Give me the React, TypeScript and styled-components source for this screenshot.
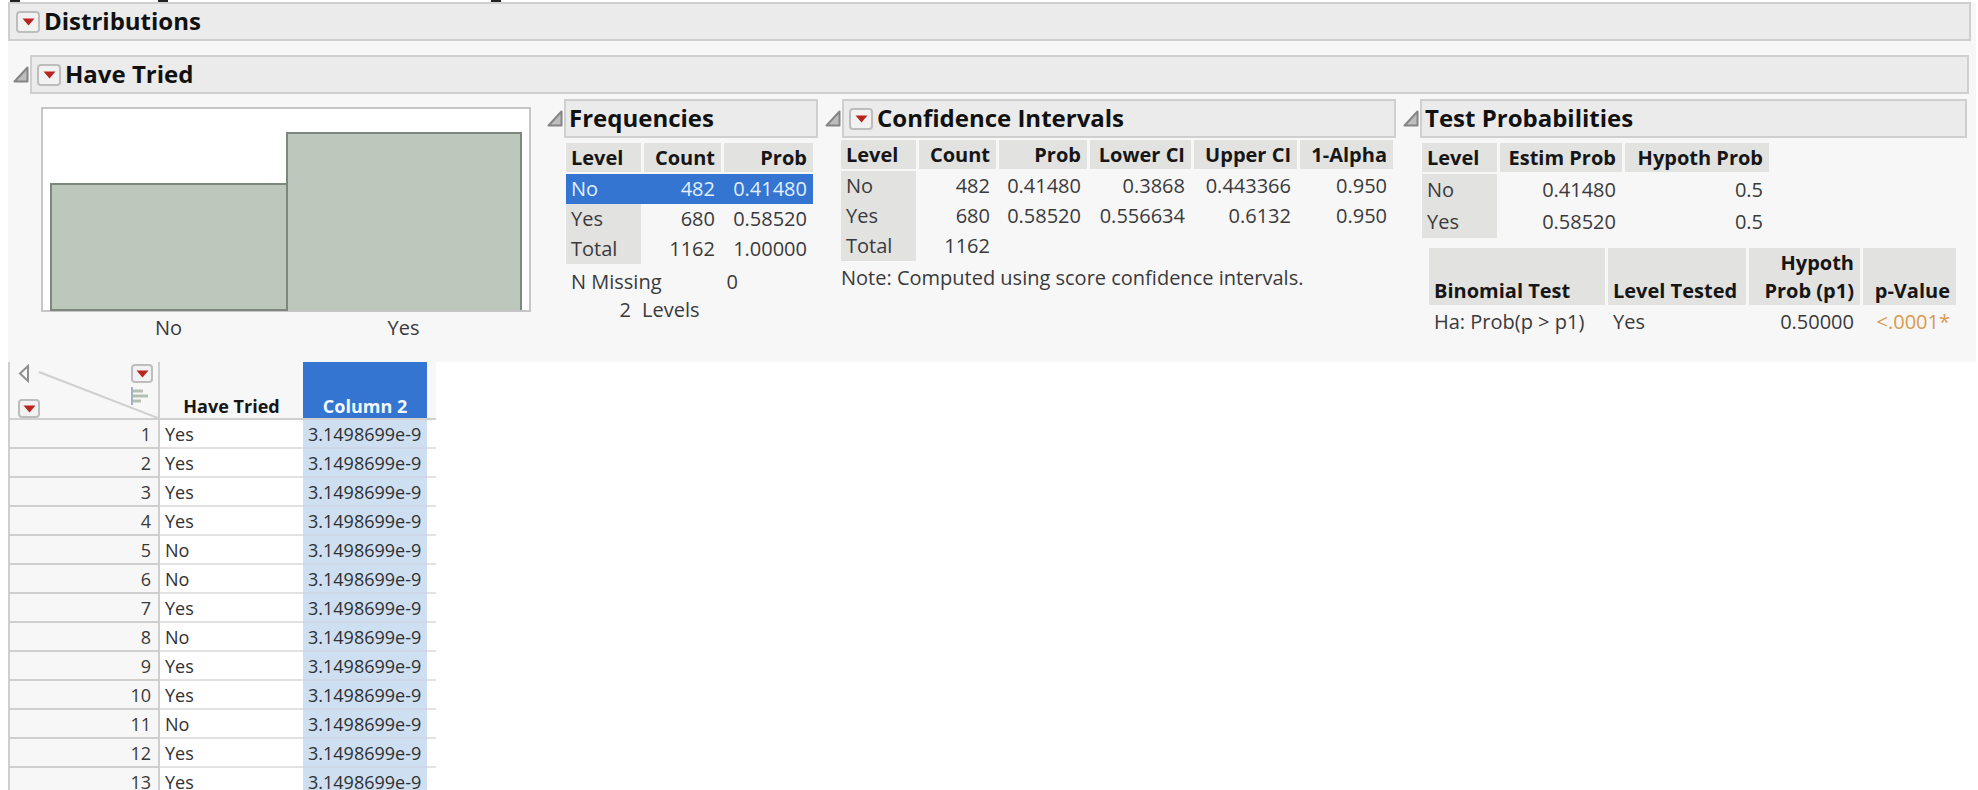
import React from "react";
import styled, { createGlobalStyle } from "styled-components";

const GlobalStyle = createGlobalStyle`
  *, *::before, *::after { box-sizing: border-box; }
  html, body, #root { height: 100%; }
  body {
    margin: 0;
    overflow: hidden;
    background: #fff;
    color: #3a3a3c;
    font-family: "Open Sans", "Noto Sans", sans-serif;
    font-size: 20px;
    line-height: 28px;
  }
`;

const panelColor = "#f7f7f7";
const cellColor = "#e2e2e0";
const lineColor = "#cfcfcf";
const selectColor = "#3375d0";

const Page = styled.main`
  height: 100%;
  padding-right: 2px;
  padding-left: 8px;
  overflow: hidden;
`;

const TickStrip = styled.svg`
  display: block;
  width: 100%;
  height: 2px;
`;

const Report = styled.section`
  height: 360px;
  padding-right: 5px;
  background: ${panelColor};
`;

const ReportBody = styled.div`
  padding: 14px 2px 0 2px;
`;

const Heading = styled.header`
  display: flex;
  align-items: center;
`;

const TitleBar = styled.div<{ $inset: number }>`
  display: flex;
  flex: 1;
  align-items: center;
  gap: 4px;
  height: 39px;
  padding-left: ${(p) => p.$inset}px;
  border: 2px solid ${lineColor};
  background: #ebebeb;
`;

const Title = styled.h2`
  margin: 0;
  padding-bottom: 2px;
  color: #111;
  font-size: 24px;
  font-weight: 700;
  line-height: 28px;
  white-space: nowrap;
`;

const Disclosure = styled.button`
  display: flex;
  width: 20px;
  height: 18px;
  padding: 0 0 0 3px;
  border: 0;
  background: none;
`;

const MenuButton = styled.button<{ $short?: boolean }>`
  display: flex;
  flex: none;
  align-items: center;
  justify-content: center;
  width: ${(p) => (p.$short ? 22 : 24)}px;
  height: ${(p) => (p.$short ? 19 : 22)}px;
  padding: 0;
  border: 2px solid #bdbdbd;
  border-radius: 4px;
  background: #f2f2f2;
`;

const Columns = styled.div`
  display: grid;
  grid-template-columns: 499px 274px 574px 1fr;
  column-gap: 4px;
  padding: 5px 2px 0 31px;
`;

const Chart = styled.figure`
  width: 490px;
  margin: 8px 0 0;
`;

const ChartArea = styled.svg`
  display: block;
  width: 100%;
  height: 205px;
`;

const ChartLabels = styled.figcaption`
  display: grid;
  grid-template-columns: 1fr 1fr;
  padding: 2px 10px;
  text-align: center;
`;

const Node = styled.section`
  min-width: 0;
`;

const NodeBody = styled.div<{ $top: number; $left: number }>`
  padding: ${(p) => p.$top}px 0 0 ${(p) => p.$left}px;
`;

const Table = styled.table<{ $width: number }>`
  width: ${(p) => p.$width}px;
  border-spacing: 0;
  table-layout: fixed;
`;

const Th = styled.th<{ $left?: boolean }>`
  padding: 1px 6px 0 5px;
  border-right: 3px solid ${panelColor};
  border-bottom: 2px solid ${panelColor};
  background: ${cellColor};
  color: #161616;
  font-size: 20px;
  font-weight: 700;
  line-height: 28px;
  text-align: ${(p) => (p.$left ? "left" : "right")};
  vertical-align: bottom;
  white-space: nowrap;
  &:last-child { border-right: 0; }
`;

const Row = styled.tr<{ $selected?: boolean; $height?: number }>`
  height: ${(p) => p.$height || 30}px;
  background: ${(p) => (p.$selected ? selectColor : "transparent")};
  color: ${(p) => (p.$selected ? "#e2efff" : "inherit")};
`;

const Td = styled.td<{ $kind?: "level" | "text" | "alert" }>`
  padding: 0 9px 0 0;
  text-align: right;
  white-space: nowrap;
  color: ${(p) => (p.$kind === "alert" ? "#d99a4e" : "inherit")};
  ${(p) =>
    (p.$kind === "level" || p.$kind === "text") &&
    `
    padding-left: 5px;
    text-align: left;
  `}
  ${(p) =>
    p.$kind === "level" &&
    `
    border-right: 3px solid ${panelColor};
    background: ${cellColor};
  `}
  ${Row}[aria-selected="true"] & {
    border-color: transparent;
    background: none;
  }
  &:last-child { padding-right: 6px; }
`;

const Note = styled.p`
  margin: 3px 0 0;
`;

const Summary = styled.dl`
  display: grid;
  grid-template-columns: 60px 11px 73px 23px;
  margin: 4px 0 0 5px;
`;

const MissingLabel = styled.dt`
  grid-column: 1 / 4;
`;

const LevelsLabel = styled.dt`
  grid-column: 3 / 5;
  grid-row: 2;
`;

const SummaryValue = styled.dd<{ $column: number; $row: number }>`
  grid-column: ${(p) => p.$column};
  grid-row: ${(p) => p.$row};
  margin: 0;
  text-align: right;
`;

const BinomialWrap = styled.div`
  padding: 10px 0 0 7px;
`;

const Sheet = styled.table`
  width: 427px;
  border-spacing: 0;
  table-layout: fixed;
  border-left: 2px solid ${lineColor};
  font-size: 18px;
  line-height: 24px;
  white-space: nowrap;
`;

const SheetHead = styled.th<{ $selected?: boolean }>`
  height: 58px;
  padding: 0;
  border-bottom: 2px solid ${lineColor};
  background: ${(p) => (p.$selected ? selectColor : panelColor)};
  color: ${(p) => (p.$selected ? "#f2f8ff" : "#161616")};
  font-weight: 700;
  text-align: center;
  vertical-align: bottom;
`;

const CornerHead = styled(SheetHead)`
  border-right: 2px solid ${lineColor};
`;

const Corner = styled.div`
  position: relative;
  display: flex;
  justify-content: space-between;
  height: 56px;
  padding: 2px 5px 0 8px;
`;

const CornerLine = styled.svg`
  position: absolute;
  inset: 0;
  width: 100%;
  height: 100%;
`;

const CornerStack = styled.div<{ $spread?: boolean }>`
  position: relative;
  display: flex;
  flex-direction: column;
  justify-content: ${(p) => (p.$spread ? "space-between" : "flex-start")};
  gap: 4px;
`;

const PlainButton = styled.button`
  display: flex;
  padding: 0;
  border: 0;
  background: none;
`;

const RowNumber = styled.th`
  height: 29px;
  padding: 0 7px 0 0;
  border-right: 2px solid ${lineColor};
  border-bottom: 2px solid ${lineColor};
  background: ${panelColor};
  font-weight: 400;
  text-align: right;
`;

const SheetCell = styled.td<{ $selected?: boolean }>`
  height: 29px;
  padding: 0 6px 0 5px;
  border-bottom: 2px solid ${(p) => (p.$selected ? "#cfd7e6" : "#e2e2e4")};
  background: ${(p) => (p.$selected ? "#cddff0" : "#fff")};
  color: #303033;
  text-align: ${(p) => (p.$selected ? "right" : "left")};
`;

function RedTriangle({ label, short }: { label: string; short?: boolean }) {
  return (
    <MenuButton type="button" aria-label={label} $short={short}>
      <svg width="13" height="8" viewBox="0 0 13 8">
        <path d="M0.5 0.5H12.5L6.5 7.5Z" fill="#b9241f" />
      </svg>
    </MenuButton>
  );
}

function NodeHeading({ title, menu }: { title: string; menu?: boolean }) {
  return (
    <Heading>
      <Disclosure type="button" aria-label={`Collapse ${title}`}>
        <svg width="16" height="17" viewBox="0 0 16 17">
          <path d="M1.5 15.5L14.5 1.5V15.5Z" fill="#bdbdbd" stroke="#858585" strokeWidth="2" strokeLinejoin="round" />
        </svg>
      </Disclosure>
      <TitleBar $inset={menu ? 5 : 3}>
        {menu && <RedTriangle label={`${title} options`} />}
        <Title>{title}</Title>
      </TitleBar>
    </Heading>
  );
}

function Cols({ widths }: { widths: number[] }) {
  return (
    <colgroup>
      {widths.map((w, i) => (
        <col key={i} width={w} />
      ))}
    </colgroup>
  );
}

function DataTable({
  width,
  widths,
  heads,
  rows,
  selected,
  rowHeight,
}: {
  width: number;
  widths: number[];
  heads: string[];
  rows: string[][];
  selected?: number;
  rowHeight?: number;
}) {
  return (
    <Table $width={width}>
      <Cols widths={widths} />
      <thead>
        <tr>
          {heads.map((h, i) => (
            <Th key={h} scope="col" $left={i === 0}>
              {h}
            </Th>
          ))}
        </tr>
      </thead>
      <tbody>
        {rows.map((row, r) => (
          <Row key={row[0]} $selected={r === selected} aria-selected={r === selected} $height={rowHeight}>
            {row.map((value, i) => (
              <Td key={i} $kind={i === 0 ? "level" : undefined}>
                {value}
              </Td>
            ))}
          </Row>
        ))}
      </tbody>
    </Table>
  );
}

const answers = ["Yes", "Yes", "Yes", "Yes", "No", "No", "Yes", "No", "Yes", "Yes", "No", "Yes", "Yes"];

export default function App() {
  return (
    <>
      <GlobalStyle />
      <Page>
        <TickStrip aria-hidden="true">
          <path d="M2 0H12V2H2ZM150 0H160V2H150ZM483 0H493V2H483Z" fill="#222" />
        </TickStrip>
        <Report>
          <TitleBar $inset={6}>
            <RedTriangle label="Distributions options" />
            <Title as="h1">Distributions</Title>
          </TitleBar>
          <ReportBody>
            <NodeHeading title="Have Tried" menu />
            <Columns>
              <Chart>
                <ChartArea viewBox="0 0 490 205" role="img" aria-label="Counts of No and Yes">
                  <rect x="1" y="1" width="488" height="203" fill="#fff" stroke="#c6c6c6" strokeWidth="2" />
                  <rect x="10" y="77" width="236" height="126" fill="#bdc8bc" stroke="#7d877d" strokeWidth="2" />
                  <path d="M246 203V26H480V203" fill="#bdc8bc" stroke="#7d877d" strokeWidth="2" />
                </ChartArea>
                <ChartLabels>
                  <span>No</span>
                  <span>Yes</span>
                </ChartLabels>
              </Chart>
              <Node>
                <NodeHeading title="Frequencies" />
                <NodeBody $top={5} $left={22}>
                  <DataTable
                    width={247}
                    widths={[78, 80, 89]}
                    heads={["Level", "Count", "Prob"]}
                    rows={[
                      ["No", "482", "0.41480"],
                      ["Yes", "680", "0.58520"],
                      ["Total", "1162", "1.00000"],
                    ]}
                    selected={0}
                  />
                  <Summary>
                    <MissingLabel>N Missing</MissingLabel>
                    <SummaryValue $column={4} $row={1}>0</SummaryValue>
                    <SummaryValue $column={1} $row={2}>2</SummaryValue>
                    <LevelsLabel>Levels</LevelsLabel>
                  </Summary>
                </NodeBody>
              </Node>
              <Node>
                <NodeHeading title="Confidence Intervals" menu />
                <NodeBody $top={2} $left={19}>
                  <DataTable
                    width={552}
                    widths={[78, 80, 91, 104, 106, 93]}
                    heads={["Level", "Count", "Prob", "Lower CI", "Upper CI", "1-Alpha"]}
                    rows={[
                      ["No", "482", "0.41480", "0.3868", "0.443366", "0.950"],
                      ["Yes", "680", "0.58520", "0.556634", "0.6132", "0.950"],
                      ["Total", "1162", "", "", "", ""],
                    ]}
                  />
                  <Note>Note: Computed using score confidence intervals.</Note>
                </NodeBody>
              </Node>
              <Node>
                <NodeHeading title="Test Probabilities" />
                <NodeBody $top={5} $left={22}>
                  <DataTable
                    width={347}
                    widths={[78, 125, 144]}
                    heads={["Level", "Estim Prob", "Hypoth Prob"]}
                    rows={[
                      ["No", "0.41480", "0.5"],
                      ["Yes", "0.58520", "0.5"],
                    ]}
                    rowHeight={32}
                  />
                  <BinomialWrap>
                    <Table $width={527}>
                      <Cols widths={[179, 141, 114, 93]} />
                      <thead>
                        <tr>
                          <Th scope="col" $left>Binomial Test</Th>
                          <Th scope="col" $left>Level Tested</Th>
                          <Th scope="col">
                            Hypoth
                            <br />
                            Prob (p1)
                          </Th>
                          <Th scope="col">p-Value</Th>
                        </tr>
                      </thead>
                      <tbody>
                        <Row>
                          <Td $kind="text">Ha: Prob(p &gt; p1)</Td>
                          <Td $kind="text">Yes</Td>
                          <Td>0.50000</Td>
                          <Td $kind="alert">&lt;.0001*</Td>
                        </Row>
                      </tbody>
                    </Table>
                  </BinomialWrap>
                </NodeBody>
              </Node>
            </Columns>
          </ReportBody>
        </Report>
        <Sheet>
          <Cols widths={[150, 143, 124, 9]} />
          <thead>
            <tr>
              <CornerHead>
                <Corner>
                  <CornerLine viewBox="0 0 148 56" preserveAspectRatio="none" aria-hidden="true">
                    <path d="M29 10L148 56" fill="none" stroke="#cfcfcf" strokeWidth="2" />
                  </CornerLine>
                  <CornerStack $spread>
                    <PlainButton type="button" aria-label="Hide panels">
                      <svg width="12" height="19" viewBox="0 0 12 19">
                        <path d="M10 2V17L2 9.500Z" fill="#f7f7f7" stroke="#8f8f8f" strokeWidth="2" />
                      </svg>
                    </PlainButton>
                    <RedTriangle label="Row options" short />
                  </CornerStack>
                  <CornerStack>
                    <RedTriangle label="Column options" short />
                    <svg width="18" height="18" viewBox="0 0 18 18" aria-hidden="true">
                      <path d="M1 0V18" stroke="#a3b1c4" strokeWidth="2" />
                      <path d="M2 4H12M2 9H17M2 14H10" stroke="#b4c0b4" strokeWidth="3" />
                    </svg>
                  </CornerStack>
                </Corner>
              </CornerHead>
              <SheetHead scope="col">Have Tried</SheetHead>
              <SheetHead scope="col" $selected>Column 2</SheetHead>
              <SheetHead aria-hidden="true" />
            </tr>
          </thead>
          <tbody>
            {answers.map((answer, i) => (
              <tr key={i}>
                <RowNumber scope="row">{i + 1}</RowNumber>
                <SheetCell>{answer}</SheetCell>
                <SheetCell $selected>3.1498699e-9</SheetCell>
                <SheetCell />
              </tr>
            ))}
          </tbody>
        </Sheet>
      </Page>
    </>
  );
}
